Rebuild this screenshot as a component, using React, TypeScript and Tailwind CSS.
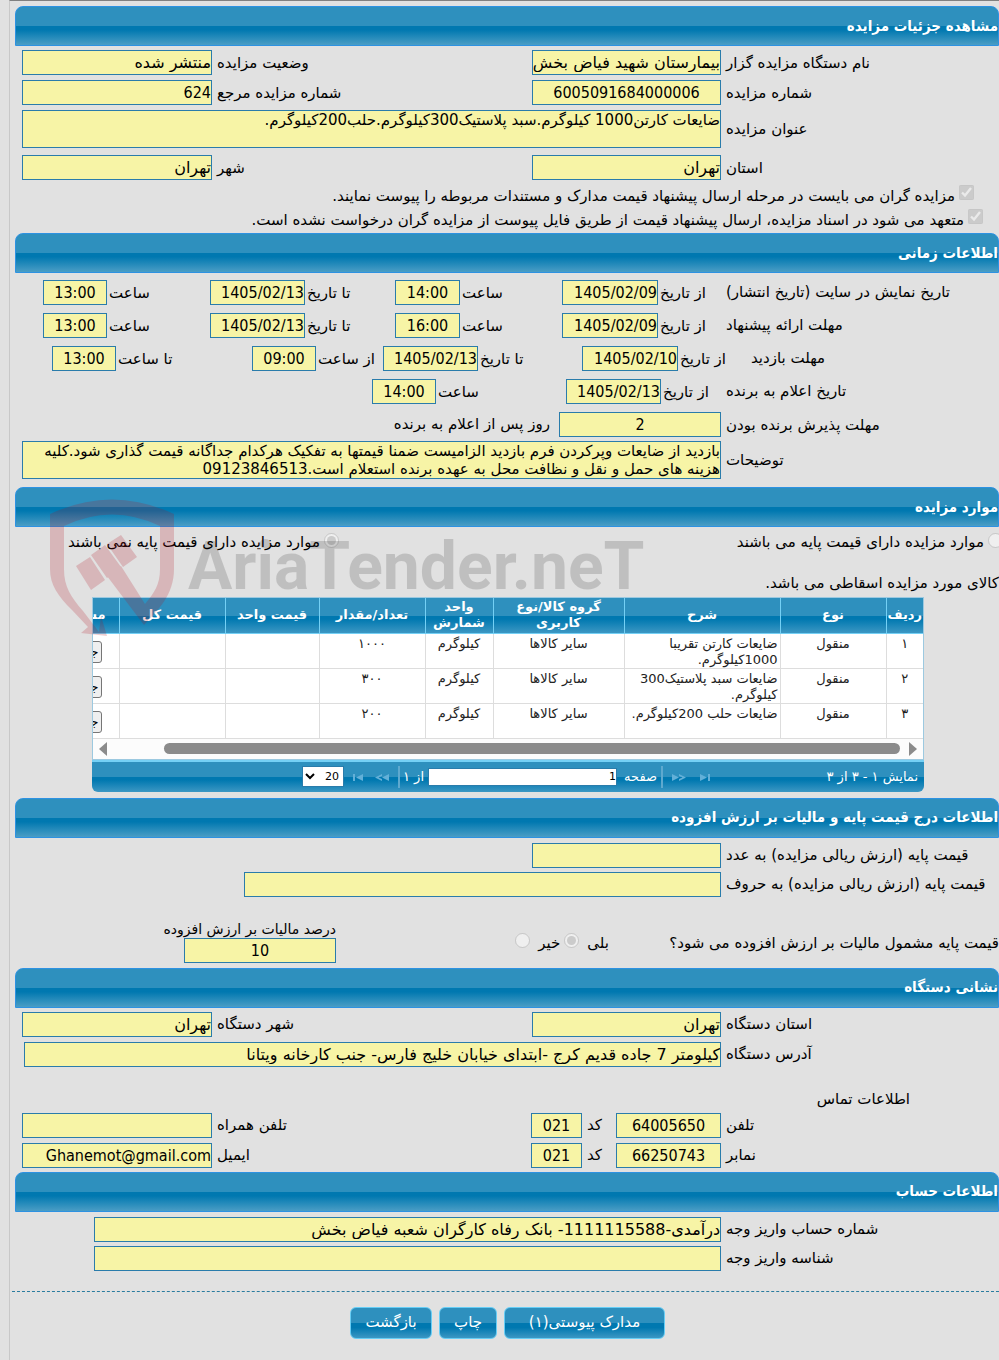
import { useId, type ReactNode } from "react";
import { clsx } from "clsx";

const boxStyle =
  "block w-full min-w-0 rounded-none border border-[#2a7cab] bg-[#f7f4a6] text-black outline-none";

const latinFont = "font-['DejaVu_Sans_Condensed','DejaVu_Sans',sans-serif]";

function SectionTitle({ children }: { children: ReactNode }) {
  return (
    <h2
      className={clsx(
        latinFont,
        "ml-[5px] flex h-10 items-center rounded-t-lg border border-[#2d92e2] bg-[linear-gradient(to_bottom,#2e90be_0%,#2e90be_50%,#0078b0_51%,#0078b0_60%,#4a9dc5_100%)] text-[15px] font-bold whitespace-nowrap text-white"
      )}
    >
      {children}
    </h2>
  );
}

type FieldProps = {
  label: string;
  value?: string;
  align?: "right" | "center";
  tight?: boolean;
};

// Renders two grid cells: the label and its box
function Field({ label, value = "", align = "right", tight = false }: FieldProps) {
  const id = useId();
  const isLatin = /^[\x20-\x7e]*$/.test(value);
  return (
    <>
      <label
        htmlFor={id}
        className={clsx("self-center whitespace-nowrap text-left leading-5", tight ? "pl-0.5" : "pl-[5px]")}
      >
        {label}
      </label>
      <input
        id={id}
        readOnly
        defaultValue={value}
        className={clsx(
          boxStyle,
          "h-[25px] text-base",
          isLatin && latinFont,
          align === "center" ? "text-center" : "text-right"
        )}
      />
    </>
  );
}

function TextField({ label, value }: { label: string; value: string }) {
  const id = useId();
  return (
    <>
      <label htmlFor={id} className="self-center whitespace-nowrap pl-[5px] text-left leading-5">
        {label}
      </label>
      <textarea
        id={id}
        readOnly
        defaultValue={value}
        className={clsx(boxStyle, "h-[38px] resize-none overflow-hidden text-[15px] leading-[18px]")}
      />
    </>
  );
}

function Pair({ children }: { children: ReactNode }) {
  return <div className="grid grid-cols-[278fr_189fr_320fr_190fr] pl-3">{children}</div>;
}

function Wide({ children }: { children: ReactNode }) {
  return <div className="grid grid-cols-[278fr_699fr] pl-3">{children}</div>;
}

function CheckLine({ children, className }: { children: ReactNode; className: string }) {
  return (
    <label className={clsx("flex h-6 items-center gap-1 whitespace-nowrap", className)}>
      <input type="checkbox" checked disabled readOnly className="mb-2 size-[15px]" />
      {children}
    </label>
  );
}

const columns = [
  { title: "ردیف", width: 37 },
  { title: "نوع", width: 106 },
  { title: "شرح", width: 156 },
  { title: "گروه کالا/نوع کاربری", width: 131 },
  { title: "واحد شمارش", width: 68 },
  { title: "تعداد/مقدار", width: 106 },
  { title: "قیمت واحد", width: 94 },
  { title: "قیمت کل", width: 106 },
];

const items = [
  { no: "۱", desc: "ضایعات کارتن تقریبا 1000کیلوگرم.", count: "۱۰۰۰" },
  { no: "۲", desc: "ضایعات سبد پلاستیک300 کیلوگرم.", count: "۳۰۰" },
  { no: "۳", desc: "ضایعات حلب 200کیلوگرم.", count: "۲۰۰" },
];

function ItemsTable() {
  return (
    <div className="ml-[82px] mr-[75px]">
      <div className="overflow-hidden border border-[#9cc9e0] bg-[#fcfcfc]">
        <table className="w-[910px] table-fixed border-collapse text-[13px] leading-4">
          <colgroup>
            {columns.map((c) => (
              <col key={c.title} style={{ width: c.width }} />
            ))}
            <col />
          </colgroup>
          <thead>
            <tr className="h-[35px] bg-[linear-gradient(to_bottom,#2e90be_0%,#2e90be_50%,#0078b0_51%,#0078b0_60%,#3c97c3_100%)] text-white">
              {columns.map((c) => (
                <th key={c.title} className="border-b border-l border-[#74d0f5] p-0 font-bold">
                  {c.title}
                </th>
              ))}
              <th className="whitespace-nowrap border-b border-[#74d0f5] p-0 pr-[13px] text-right font-bold">
                مشاهده جزئیات
              </th>
            </tr>
          </thead>
          <tbody className="bg-white text-[#222]">
            {items.map((item) => (
              <tr key={item.no} className="h-[35px] border-b border-[#ddd] align-top text-center">
                <td className="border-l border-[#ddd] p-0 pt-0.5">{item.no}</td>
                <td className="border-l border-[#ddd] p-0 pt-0.5">منقول</td>
                <td className="border-l border-[#ddd] p-0 pr-0.5 pt-0.5 text-right">{item.desc}</td>
                <td className="border-l border-[#ddd] p-0 pt-0.5">سایر کالاها</td>
                <td className="border-l border-[#ddd] p-0 pt-0.5">کیلوگرم</td>
                <td className="border-l border-[#ddd] p-0 pt-0.5">{item.count}</td>
                <td className="border-l border-[#ddd] p-0" />
                <td className="border-l border-[#ddd] p-0" />
                <td className="p-0 pr-[17px] pt-[7px] text-right">
                  <button
                    type="button"
                    className="block h-[22px] rounded-[3px] border border-[#767676] bg-[#efefef] px-0.5 text-[13px] text-black"
                  >
                    جزئیات
                  </button>
                </td>
              </tr>
            ))}
          </tbody>
        </table>
        {/* Horizontal scroll track */}
        <div className="flex h-5 items-center pl-1.5 pr-1.5">
          <svg viewBox="0 0 8 14" className="h-3.5 w-2 fill-[#8b8b8b]">
            <path d="M0 0 8 7 0 14Z" />
          </svg>
          <div className="mr-[9px] h-[11px] flex-1 rounded-full bg-[#8b8b8b]" />
          <svg viewBox="0 0 8 14" className="mr-[57px] h-3.5 w-2 fill-[#8b8b8b]">
            <path d="M8 0 0 7 8 14Z" />
          </svg>
        </div>
      </div>
      <Pager />
    </div>
  );
}

function Arrow({ kind }: { kind: "first" | "prev" | "next" | "last" }) {
  return (
    <button type="button" aria-label={kind} className="size-4 shrink-0">
      <svg viewBox="0 0 16 16" className="fill-[#63b0d8]">
        {kind === "first" && <path d="M3 5v7l7-3.500ZM11 5h2v7h-2Z" />}
        {kind === "prev" && <path d="M1 5v7l7-3.500ZM8 5l7 3.500-7 3.500v-2l3.500-1.500L8 7Z" />}
        {kind === "next" && <path d="M15 5v7L8 8.500ZM8 5 1 8.500 8 12v-2L4.500 8.500 8 7Z" />}
        {kind === "last" && <path d="M13 5v7L6 8.500ZM3 5h2v7H3Z" />}
      </svg>
    </button>
  );
}

function Pager() {
  return (
    <div className="flex h-8 items-center rounded-b-md border-t-2 border-[#74d0f5] bg-[linear-gradient(to_bottom,#2e90be_0%,#2e90be_50%,#0078b0_51%,#0078b0_60%,#3c97c3_100%)] pr-1.5 text-[13px] text-white">
      <span className="w-[205px] whitespace-nowrap">نمایش ۱ - ۳ از ۳</span>
      <Arrow kind="first" />
      <span className="mr-2.5" />
      <Arrow kind="prev" />
      <span className="ml-1 mr-2 h-[22px] w-0.5 bg-[#5ea9cf]" />
      <label htmlFor="page" className="w-9 whitespace-nowrap">صفحه</label>
      <input
        id="page"
        defaultValue="1"
        className="mr-1 h-[18px] w-[189px] border border-[#2a7cab] bg-white text-right text-[11px] text-black"
      />
      <span className="mr-1 w-5 whitespace-nowrap">از ۱</span>
      <span className="mx-1 h-[22px] w-0.5 bg-[#5ea9cf]" />
      <span className="mr-1" />
      <Arrow kind="next" />
      <span className="mr-2" />
      <Arrow kind="last" />
      <select
        aria-label="تعداد در صفحه"
        defaultValue="20"
        className="mr-1.5 h-[21px] w-[42px] border border-[#2a7cab] bg-white text-[11px] text-black"
      >
        <option>20</option>
        <option>50</option>
      </select>
    </div>
  );
}

function Watermark() {
  return (
    <div dir="ltr" className="pointer-events-none absolute left-10 top-3 flex items-start">
      <svg viewBox="0 0 124 138" className="h-[138px] w-[124px] fill-[#b01020] opacity-20">
        <path d="M0 15Q62-14 124 15V70C124 96 108 111 94 126L57 77 71 67 95 105C104 94 110 86 110 70V27Q62 4 14 27V70C14 88 21 98 33 112L49 133 51 117 57 137 31 134 38 128 22 111C8 97 0 86 0 70Z" />
        <path d="M26 67 40 58 55 81 41 91ZM41 56 55 46 71 68 57 79ZM57 45 71 36 87 58 73 68Z" />
      </svg>
      <span className="ml-3.5 mt-5 font-[Roboto,sans-serif] text-[66px] font-bold leading-[96px] text-black/15">
        AriaTender.neT
      </span>
    </div>
  );
}

function ActionButton({ children, className }: { children: ReactNode; className: string }) {
  return (
    <button
      type="button"
      className={clsx(
        "h-8 rounded-md border border-[#66cdf5] bg-[linear-gradient(to_bottom,#2e90be_0%,#2e90be_50%,#0078b0_51%,#0078b0_65%,#3c97c3_100%)] text-[15px] text-white",
        className
      )}
    >
      {children}
    </button>
  );
}

export default function App() {
  return (
    <div className="min-h-screen overflow-hidden bg-[#e1e1e1] pl-[9px]">
      <main
        dir="rtl"
        className="min-h-screen border-l border-t border-l-[#c8c8c8] border-t-[#808080] pb-5 pt-[5px] font-['DejaVu_Sans',sans-serif] text-[15px] text-black"
      >
        {/* Auction details */}
        <section>
          <SectionTitle>مشاهده جزئیات مزایده</SectionTitle>
          <div className="mt-1 space-y-[5px]">
            <Pair>
              <Field label="نام دستگاه مزایده گزار" value="بیمارستان شهید فیاض بخش" />
              <Field label="وضعیت مزایده" value="منتشر شده" />
            </Pair>
            <Pair>
              <Field label="شماره مزایده" value="6005091684000006" align="center" />
              <Field label="شماره مزایده مرجع" value="624" />
            </Pair>
            <Wide>
              <TextField
                label="عنوان مزایده"
                value="ضایعات کارتن1000 کیلوگرم.سبد پلاستیک300کیلوگرم.حلب200کیلوگرم."
              />
            </Wide>
          </div>
          <div className="mt-[7px]">
            <Pair>
              <Field label="استان" value="تهران" />
              <Field label="شهر" value="تهران" />
            </Pair>
          </div>
          <div className="pt-1">
            <CheckLine className="pr-[25px]">
              مزایده گران می بایست در مرحله ارسال پیشنهاد قیمت مدارک و مستندات مربوطه را پیوست نمایند.
            </CheckLine>
            <CheckLine className="pr-4">
              متعهد می شود در اسناد مزایده، ارسال پیشنهاد قیمت از طریق فایل پیوست از مزایده گران درخواست نشده است.
            </CheckLine>
          </div>
        </section>

        {/* Schedule */}
        <section className="mt-px">
          <SectionTitle>اطلاعات زمانی</SectionTitle>
          <div className="mt-[7px] space-y-2 pl-3">
            <div className="grid grid-cols-[278fr_63fr_96fr_102fr_65fr_90fr_95fr_103fr_64fr_21fr]">
              <span className="self-center whitespace-nowrap pl-[5px] text-left">تاریخ نمایش در سایت (تاریخ انتشار)</span>
              <Field tight label="از تاریخ" value="1405/02/09" />
              <Field tight label="ساعت" value="14:00" align="center" />
              <Field tight label="تا تاریخ" value="1405/02/13" />
              <Field tight label="ساعت" value="13:00" align="center" />
            </div>
            <div className="grid grid-cols-[278fr_63fr_96fr_102fr_65fr_90fr_95fr_103fr_64fr_21fr]">
              <span className="self-center whitespace-nowrap pl-[5px] text-left">مهلت ارائه پیشنهاد</span>
              <Field tight label="از تاریخ" value="1405/02/09" />
              <Field tight label="ساعت" value="16:00" align="center" />
              <Field tight label="تا تاریخ" value="1405/02/13" />
              <Field tight label="ساعت" value="13:00" align="center" />
            </div>
            <div className="grid grid-cols-[248fr_73fr_96fr_104fr_95fr_67fr_64fr_136fr_64fr_30fr]">
              <span className="self-center whitespace-nowrap text-left">مهلت بازدید</span>
              <Field tight label="از تاریخ" value="1405/02/10" />
              <Field tight label="تا تاریخ" value="1405/02/13" />
              <Field tight label="از ساعت" value="09:00" align="center" />
              <Field tight label="تا ساعت" value="13:00" align="center" />
            </div>
            <div className="grid grid-cols-[278fr_60fr_95fr_130fr_64fr_350fr]">
              <span className="self-center whitespace-nowrap pl-[5px] text-left">تاریخ اعلام به برنده</span>
              <Field tight label="از تاریخ" value="1405/02/13" />
              <Field tight label="ساعت" value="14:00" align="center" />
            </div>
          </div>
          <div className="mt-2 space-y-1">
            <div className="grid grid-cols-[278fr_162fr_537fr] pl-3">
              <Field label="مهلت پذیرش برنده بودن" value="2" align="center" />
              <span className="self-center pr-[9px]">روز پس از اعلام به برنده</span>
            </div>
            <Wide>
              <TextField
                label="توضیحات"
                value="بازدید از ضایعات وپرکردن فرم بازدید الزامیست ضمنا قیمتها به تفکیک هرکدام جداگانه قیمت گذاری شود.کلیه هزینه های حمل و نقل و نظافت محل به عهده برنده استعلام است.09123846513"
              />
            </Wide>
          </div>
        </section>

        {/* Auction items */}
        <section className="relative mt-2">
          <SectionTitle>موارد مزایده</SectionTitle>
          <div className="-mr-1 flex h-[31px] items-center justify-between pl-[58px]">
            <label className="flex items-center gap-1">
              <input type="radio" name="base" disabled className="mb-1 size-[15px]" />
              موارد مزایده دارای قیمت پایه می باشند
            </label>
            <label className="flex items-center gap-1">
              <input type="radio" name="base" disabled defaultChecked className="mb-1 size-[15px]" />
              موارد مزایده دارای قیمت پایه نمی باشند
            </label>
          </div>
          <p className="mt-[15px] h-6 leading-5">کالای مورد مزایده اسقاطی می باشد.</p>
          <ItemsTable />
          <Watermark />
        </section>

        {/* Base price and VAT */}
        <section className="mt-1.5">
          <SectionTitle>اطلاعات درج قیمت پایه و مالیات بر ارزش افزوده</SectionTitle>
          <div className="mt-[5px] space-y-1">
            <div className="grid grid-cols-[278fr_189fr_510fr] pl-3">
              <Field label="قیمت پایه (ارزش ریالی مزایده) به عدد" />
            </div>
            <div className="grid grid-cols-[278fr_477fr_222fr] pl-3">
              <Field label="قیمت پایه (ارزش ریالی مزایده) به حروف" />
            </div>
          </div>
          <div className="mt-[22px] grid grid-cols-[390fr_93fr_180fr_152fr_174fr] items-end">
            <span className="mb-2 min-w-0 whitespace-nowrap leading-6">قیمت پایه مشمول مالیات بر ارزش افزوده می شود؟</span>
            <div className="mb-2 flex min-w-0 items-center whitespace-nowrap leading-6">
              <label htmlFor="vat-yes">بلی</label>
              <input id="vat-yes" type="radio" name="vat" disabled defaultChecked className="mb-1 mr-2 size-[15px] shrink-0" />
              <label htmlFor="vat-no" className="mr-1">خیر</label>
              <input id="vat-no" type="radio" name="vat" disabled className="mb-1 mr-2 size-[15px] shrink-0" />
            </div>
            <span />
            <div className="min-w-0">
              <label htmlFor="vat-rate" className="block h-[19px] whitespace-nowrap text-[14px] leading-5">
                درصد مالیات بر ارزش افزوده
              </label>
              <input id="vat-rate" readOnly defaultValue="10" className={clsx(boxStyle, latinFont, "h-[25px] text-center text-base")} />
            </div>
          </div>
        </section>

        {/* Address and contact */}
        <section className="mt-[5px]">
          <SectionTitle>نشانی دستگاه</SectionTitle>
          <div className="mt-1 space-y-[5px]">
            <Pair>
              <Field label="استان دستگاه" value="تهران" />
              <Field label="شهر دستگاه" value="تهران" />
            </Pair>
            <div className="grid grid-cols-[278fr_697fr_2fr] pl-3">
              <Field
                label="آدرس دستگاه"
                value="کیلومتر 7 جاده قدیم کرج -ابتدای خیابان خلیج فارس- جنب کارخانه ویتانا"
              />
            </div>
          </div>
          <h3 className="mt-[22px] pr-[89px] leading-5">اطلاعات تماس</h3>
          <div className="mt-1 space-y-[5px]">
            <div className="grid grid-cols-[278fr_105fr_34fr_51fr_319fr_190fr] pl-3">
              <Field label="تلفن" value="64005650" align="center" />
              <Field label="کد" value="021" align="center" />
              <Field label="تلفن همراه" />
            </div>
            <div className="grid grid-cols-[278fr_105fr_34fr_51fr_319fr_190fr] pl-3">
              <Field label="نمابر" value="66250743" align="center" />
              <Field label="کد" value="021" align="center" />
              <Field label="ایمیل" value="Ghanemot@gmail.com" />
            </div>
          </div>
        </section>

        {/* Bank account */}
        <section className="mt-1">
          <SectionTitle>اطلاعات حساب</SectionTitle>
          <div className="mt-[5px] space-y-1">
            <div className="grid grid-cols-[278fr_627fr_72fr] pl-3">
              <Field label="شماره حساب واریز وجه" value="درآمدی-1111115588- بانک رفاه کارگران شعبه فیاض بخش" />
            </div>
            <div className="grid grid-cols-[278fr_627fr_72fr] pl-3">
              <Field label="شناسه واریز وجه" />
            </div>
          </div>
        </section>

        <div className="ml-0.5 mt-5 flex justify-center gap-[7px] border-t border-dashed border-[#2a7c9f] pl-1 pt-[15px]">
          <ActionButton className="w-[161px]">مدارک پیوستی(۱)</ActionButton>
          <ActionButton className="w-[58px]">چاپ</ActionButton>
          <ActionButton className="w-[82px]">بازگشت</ActionButton>
        </div>
      </main>
    </div>
  );
}
